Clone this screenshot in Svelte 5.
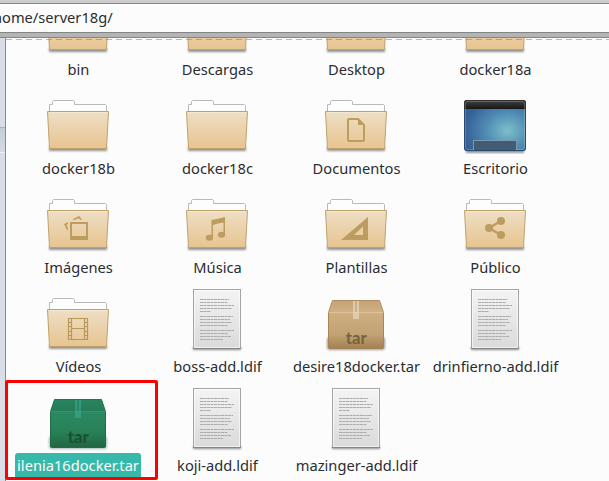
<script>
  const items = [
    { name: 'bin', kind: 'folder' },
    { name: 'Descargas', kind: 'folder' },
    { name: 'Desktop', kind: 'folder' },
    { name: 'docker18a', kind: 'folder' },
    { name: 'docker18b', kind: 'folder' },
    { name: 'docker18c', kind: 'folder' },
    { name: 'Documentos', kind: 'folder', emblem: 'document' },
    { name: 'Escritorio', kind: 'desktop' },
    { name: 'Imágenes', kind: 'folder', emblem: 'pictures' },
    { name: 'Música', kind: 'folder', emblem: 'music' },
    { name: 'Plantillas', kind: 'folder', emblem: 'templates' },
    { name: 'Público', kind: 'folder', emblem: 'share' },
    { name: 'Vídeos', kind: 'folder', emblem: 'video' },
    { name: 'boss-add.ldif', kind: 'text' },
    { name: 'desire18docker.tar', kind: 'tar' },
    { name: 'drinfierno-add.ldif', kind: 'text' },
    { name: 'ilenia16docker.tar', kind: 'tar', selected: true },
    { name: 'koji-add.ldif', kind: 'text' },
    { name: 'mazinger-add.ldif', kind: 'text' }
  ];

  // Each text row: [y, length]
  const lines = [
    [11.5, 29], [14.5, 28], [17.5, 34], [20.5, 32], [23.5, 11],
    [28.5, 33], [31.5, 30], [34.5, 32], [37.5, 28],
    [42.5, 34], [45.5, 28], [48.5, 31], [51.5, 23]
  ];
</script>

<svg class="defs" width="0" height="0" aria-hidden="true">
  <defs>
    <linearGradient id="folder" x1="0" y1="0" x2="0" y2="1">
      <stop offset="0" stop-color="#eedfc5" /><stop offset="1" stop-color="#e8c490" />
    </linearGradient>
    <linearGradient id="paper" x1="0" y1="0" x2="0" y2="1">
      <stop offset="0" stop-color="#f4f4f4" /><stop offset="1" stop-color="#dadada" />
    </linearGradient>
    <radialGradient id="wall" cx="0.7" cy="0.6" r="0.7">
      <stop offset="0" stop-color="#7cbfcb" /><stop offset="0.5" stop-color="#508cb4" /><stop offset="1" stop-color="#345f96" />
    </radialGradient>
    <linearGradient id="bar" x1="0" y1="0" x2="0" y2="1">
      <stop offset="0" stop-color="#434343" /><stop offset="1" stop-color="#161616" />
    </linearGradient>
    <linearGradient id="box" x1="0" y1="0" x2="0" y2="1">
      <stop offset="0" stop-color="#cfae80" /><stop offset="0.6" stop-color="#c2a374" /><stop offset="1" stop-color="#a28052" />
    </linearGradient>
    <linearGradient id="lid" x1="0" y1="0" x2="0" y2="1">
      <stop offset="0" stop-color="#c5a277" /><stop offset="1" stop-color="#d0b084" />
    </linearGradient>
    <linearGradient id="boxSel" x1="0" y1="0" x2="0" y2="1">
      <stop offset="0" stop-color="#2b8a63" /><stop offset="0.6" stop-color="#287f56" /><stop offset="1" stop-color="#216642" />
    </linearGradient>
    <linearGradient id="lidSel" x1="0" y1="0" x2="0" y2="1">
      <stop offset="0" stop-color="#288460" /><stop offset="1" stop-color="#267c57" />
    </linearGradient>
    <filter id="soft" x="-20%" y="-100%" width="140%" height="300%"><feGaussianBlur stdDeviation="1.1" /></filter>
  </defs>
</svg>

<div class="window">
  <div class="toolbar"></div>
  <div class="location"><span>/home/server18g/</span></div>
  <div class="splitter"></div>
  <div class="main">
    <aside><div class="current"></div></aside>
    <section>
      <div class="grid">
        {#each items as item}
          <div class="item" class:selected={item.selected}>
            <svg class="icon" width="64" height="64" viewBox="0 0 64 64">
              {#if item.kind === 'folder'}
                <rect x="3" y="57" width="58" height="4" fill="#000" opacity=".42" filter="url(#soft)" />
                <path d="M3.5 22V14.5H6.5V11.5L7.5 10.5H27.5L28.5 11.5V14.5H59.5L60.5 15.5V22Z" fill="#fdfdfd" stroke="#b9b9b9" />
                <path d="M1.5 21.5H62.5L60.5 58.5H3.5Z" fill="url(#folder)" stroke="#bfa26b" stroke-linejoin="round" />
                <path d="M3 22.5H61" stroke="#f8ecd6" opacity=".7" />
                {#if item.emblem === 'document'}
                  <path d="M25 28H34.5L41 34.5V50Q41 52 39 52H25Q23 52 23 50V30Q23 28 25 28ZM25 30V50H39V35H34V30Z" fill="#bd9c60" fill-rule="evenodd" />
                {:else if item.emblem === 'pictures'}
                  <path d="M24 33H42V51H24ZM26 35V47H40V35Z" fill="#bd9c60" fill-rule="evenodd" />
                  <path d="M26.500 30.200L33 27L36 30.500L34.500 31L32.500 29.200L28.500 31ZM22 33L18 35L21.500 42L22 39L20.500 36L22 35Z" fill="#bd9c60" />
                {:else if item.emblem === 'music'}
                  <path d="M26.500 31Q33 30 40 28V46H38.500V33.500Q33 34 28 36V49H26.500Z" fill="#bd9c60" />
                  <ellipse cx="24.500" cy="48.800" rx="3.700" ry="3" fill="#bd9c60" /><ellipse cx="36.500" cy="45.800" rx="3.600" ry="3" fill="#bd9c60" />
                {:else if item.emblem === 'templates'}
                  <path d="M17 51L44 28V51ZM30 46H39V37.500Z" fill="#bd9c60" fill-rule="evenodd" />
                {:else if item.emblem === 'share'}
                  <path d="M38 32L26 39L38 46" fill="none" stroke="#bd9c60" stroke-width="2.300" />
                  <circle cx="38" cy="32" r="4" fill="#bd9c60" /><circle cx="26" cy="39" r="4" fill="#bd9c60" /><circle cx="38" cy="46" r="4" fill="#bd9c60" />
                {:else if item.emblem === 'video'}
                  <path d="M22.500 30.500H41.500V51.500H22.500ZM25.500 30V52M38.500 30V52M25 40.500H39M22 34.500H25M22 38.500H25M22 43.500H25M22 47.500H25M39 34.500H42M39 38.500H42M39 43.500H42M39 47.500H42" fill="none" stroke="#b99759" stroke-width="1.200" />
                {/if}
              {:else if item.kind === 'desktop'}
                <rect x="3" y="59" width="58" height="4" fill="#000" opacity=".42" filter="url(#soft)" />
                <rect x="1" y="10" width="62" height="51" rx="3" fill="url(#wall)" />
                <path d="M1 19V13Q1 10 4 10H60Q63 10 63 13V19Z" fill="url(#bar)" />
                <rect x="10.500" y="50.500" width="43" height="10" fill="#425c74" stroke="#7999b4" />
                <rect x="2.500" y="11.500" width="59" height="48" rx="2" fill="none" stroke="#fff" opacity=".2" />
                <rect x="11" y="51" width="42" height="9" fill="#425c74" />
                <path d="M1.500 19V58Q1.500 60.500 4 60.500H60Q62.500 60.500 62.500 58V19" fill="none" stroke="#28496f" />
                <path d="M1.500 19V13Q1.500 10.500 4 10.500H60Q62.500 10.500 62.500 13V19" fill="none" stroke="#333" />
              {:else if item.kind === 'text'}
                <rect x="8" y="59" width="48" height="3" fill="#000" opacity=".45" filter="url(#soft)" />
                <rect x="8.500" y="1.500" width="47" height="59" fill="url(#paper)" stroke="#a5a5a5" />
                <rect x="9.500" y="2.500" width="45" height="57" fill="none" stroke="#fff" opacity=".6" />
                <path d="M8 60.500H56" stroke="#858585" />
                {#each lines as [y, length]}
                  <path d="M15 {y}h{length}" stroke="#acacac" stroke-dasharray="3.600 .4 2.500 .4" />
                {/each}
              {:else}
                <rect x="3" y="49" width="58" height="13" rx="3" fill={item.selected ? '#174c50' : '#000'} opacity=".38" filter="url(#soft)" />
                <path d="M8.500 12.500H55.500L59.500 24.500H4.500Z" fill={item.selected ? 'url(#lidSel)' : 'url(#lid)'} stroke={item.selected ? '#237450' : '#b18e60'} />
                <rect x="4.500" y="24.500" width="55" height="36" rx="1" fill={item.selected ? 'url(#boxSel)' : 'url(#box)'} stroke={item.selected ? '#216c47' : '#a78455'} />
                <path d="M5 24.500H59" stroke={item.selected ? '#319672' : '#dcc39d'} />
                <path d="M29 13H35V31H29Z" fill={item.selected ? '#37a98c' : '#eadbc3'} opacity=".65" />
                <path d="M32 13V24" stroke={item.selected ? '#23734f' : '#b99566'} />
                <text x="21.700" y="55.700" textLength="21" lengthAdjust="spacingAndGlyphs" class="tar" fill={item.selected ? '#184f32' : '#76603e'}>tar</text>
              {/if}
            </svg>
            <span class="label">{item.name}</span>
          </div>
        {/each}
      </div>
      <div class="dashes"></div>
    </section>
  </div>
  <div class="highlight"></div>
</div>

<style>
  .defs { position: absolute; }
  .window {
    position: relative;
    display: flex;
    flex-direction: column;
    width: 609px;
    height: 481px;
    overflow: hidden;
    background: #fcfcfc;
    color: #292d31;
    font: 14.67px/20px 'Noto Sans', sans-serif;
  }
  .toolbar { height: 3px; flex: none; background: #cdcdcd; }
  .location {
    flex: none;
    box-sizing: border-box;
    height: 30px;
    padding-bottom: 2px;
    border-top: 1px solid #858585;
    border-bottom: 1px solid #858585;
    display: flex;
    align-items: center;
    background: #fcfcfc;
  }
  .location span { margin-left: -12.5px; }
  .splitter { flex: none; height: 4px; background: #b4b4b4; border-bottom: 1px solid #858585; }
  .main { flex: 1; min-height: 0; display: flex; }
  aside {
    flex: none;
    box-sizing: border-box;
    width: 6px;
    padding-top: 89px;
    border-right: 1px solid #8a8a8c;
    background: #d9dde7;
  }
  .current {
    height: 24px;
    border-top: 1px solid #acb1b9;
    border-bottom: 1px solid #edf0f3;
    background: linear-gradient(#c4cdd6, #d4dae2);
  }
  section { position: relative; flex: 1; min-width: 0; overflow: hidden; }
  .grid {
    display: grid;
    grid-template-columns: repeat(4, 139px);
    grid-auto-rows: 99px;
    margin: -47px 0 0 2.5px;
  }
  .item { display: flex; flex-direction: column; align-items: center; }
  .icon { display: block; flex: none; }
  .label { margin: 2px 0 0 1px; padding: 2px 2px 4px; border-radius: 3px; white-space: nowrap; }
  .selected .label { margin-left: 0; background: #36b9aa; color: #fcfcfc; }
  .tar { font: bold 17px 'Lato', sans-serif; }
  .dashes {
    position: absolute;
    inset: 1px 0 auto;
    height: 1px;
    background: repeating-linear-gradient(90deg, #87878799 0 6px, transparent 6px 10px);
  }
  .highlight {
    position: absolute;
    left: 5px;
    top: 380px;
    box-sizing: border-box;
    width: 153px;
    height: 100px;
    border: 3px solid #f00;
    border-radius: 2px;
  }
</style>
